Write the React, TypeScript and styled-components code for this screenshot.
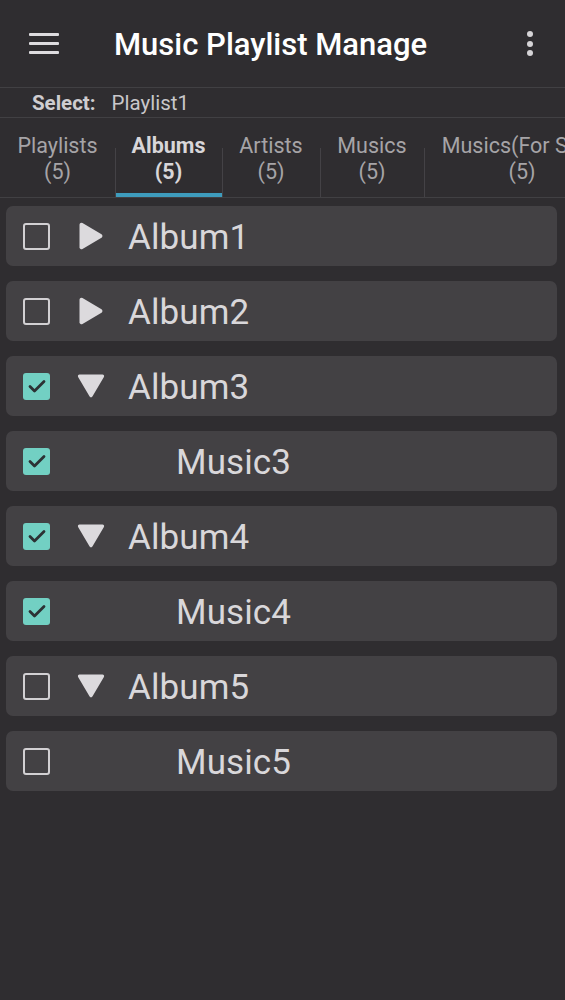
import React, { useState } from 'react';
import styled, { createGlobalStyle } from 'styled-components';

const GlobalStyle = createGlobalStyle`
  html, body {
    margin: 0;
    padding: 0;
    background: #2f2d30;
  }
  body {
    font-family: Roboto, "Noto Sans", "Liberation Sans", sans-serif;
  }
`;

const Page = styled.div`
  width: 565px;
  min-height: 1000px;
  background: #2f2d30;
  overflow: hidden;
`;

const AppBar = styled.header`
  height: 88px;
  display: flex;
  align-items: center;
  border-bottom: 1px solid #414043;
  box-sizing: border-box;
  padding: 0 0 0 29px;
`;

const MenuButton = styled.div`
  width: 30px;
  height: 21px;
  display: flex;
  flex-direction: column;
  justify-content: space-between;
  margin-top: -1px;

  span {
    display: block;
    height: 3px;
    background: #dedcdf;
    border-radius: 1px;
  }
`;

const Title = styled.h1`
  margin: 2px 0 0 55px;
  flex: 1;
  font-size: 31px;
  font-weight: 500;
  color: #ffffff;
  white-space: nowrap;
`;

const MoreButton = styled.div`
  width: 6px;
  display: flex;
  flex-direction: column;
  gap: 3.5px;
  margin-right: 32px;

  span {
    width: 6px;
    height: 6px;
    border-radius: 50%;
    background: #d6d4d7;
  }
`;

const SelectBar = styled.div`
  height: 30px;
  display: flex;
  align-items: center;
  gap: 16px;
  padding-left: 32px;
  border-bottom: 1px solid #414043;
  box-sizing: border-box;
  font-size: 20.5px;
  color: #c9c7ca;
`;

const SelectLabel = styled.span`
  font-weight: 700;
  color: #cfcdd0;
`;

const TabBar = styled.nav`
  height: 80px;
  display: flex;
  border-bottom: 1px solid #414043;
  box-sizing: border-box;
  white-space: nowrap;
`;

const Tab = styled.div<{ $width: number; $active?: boolean; $divider?: boolean }>`
  position: relative;
  flex: 0 0 ${(p) => p.$width}px;
  display: flex;
  flex-direction: column;
  align-items: center;
  padding-top: 15px;
  box-sizing: border-box;
  font-size: 21.5px;
  line-height: 26px;
  font-weight: ${(p) => (p.$active ? 700 : 400)};
  color: ${(p) => (p.$active ? '#d8d6d9' : '#a6a4a7')};
  border-bottom: 4px solid ${(p) => (p.$active ? '#3e9cbd' : 'transparent')};

  &::before {
    content: '';
    display: ${(p) => (p.$divider ? 'block' : 'none')};
    position: absolute;
    left: 0;
    bottom: -4px;
    width: 1px;
    height: 49px;
    background: #444246;
  }
`;

const List = styled.div`
  display: flex;
  flex-direction: column;
  gap: 15px;
  padding: 8px 8px 0 6px;
`;

const Row = styled.div`
  height: 60px;
  display: flex;
  align-items: center;
  padding-left: 17px;
  background: #434144;
  border-radius: 7px;
`;

const CheckBox = styled.div<{ $checked: boolean }>`
  flex: 0 0 auto;
  width: 27px;
  height: 27px;
  box-sizing: border-box;
  border-radius: 3px;
  border: ${(p) => (p.$checked ? 'none' : '2.5px solid #d2d0d3')};
  background: ${(p) => (p.$checked ? '#72d0c3' : 'transparent')};
  display: flex;
  align-items: center;
  justify-content: center;
`;

const Arrow = styled.div`
  flex: 0 0 auto;
  width: 30px;
  height: 28px;
  margin-left: 26px;
  display: flex;
  align-items: center;
  justify-content: center;
`;

const Label = styled.span<{ $indent: boolean }>`
  margin-left: ${(p) => (p.$indent ? '126px' : '22px')};
  margin-top: 2px;
  font-size: 35px;
  color: #d9d7da;
  letter-spacing: 0.1px;
`;

type Item = { name: string; kind: 'album' | 'music'; open?: boolean; checked: boolean };

const items: Item[] = [
  { name: 'Album1', kind: 'album', open: false, checked: false },
  { name: 'Album2', kind: 'album', open: false, checked: false },
  { name: 'Album3', kind: 'album', open: true, checked: true },
  { name: 'Music3', kind: 'music', checked: true },
  { name: 'Album4', kind: 'album', open: true, checked: true },
  { name: 'Music4', kind: 'music', checked: true },
  { name: 'Album5', kind: 'album', open: true, checked: false },
  { name: 'Music5', kind: 'music', checked: false },
];

const tabs = [
  { label: 'Playlists', width: 115 },
  { label: 'Albums', width: 107 },
  { label: 'Artists', width: 98 },
  { label: 'Musics', width: 104 },
  { label: 'Musics(For Sort)', width: 196 },
];

function Check() {
  return (
    <svg width="20" height="16" viewBox="0 0 20 16">
      <path d="M3 8.5l4.5 4.5L17 3.5" fill="none" stroke="#2c3134" strokeWidth="2.8" strokeLinecap="round" strokeLinejoin="round" />
    </svg>
  );
}

function Triangle({ open }: { open?: boolean }) {
  return open ? (
    <svg width="30" height="26" viewBox="0 0 30 26">
      <path d="M3.5 1.5h23a1.6 1.6 0 0 1 1.4 2.4L16.4 23.6a1.6 1.6 0 0 1-2.8 0L2.1 3.9A1.6 1.6 0 0 1 3.5 1.5z" fill="#dcdadd" />
    </svg>
  ) : (
    <svg width="26" height="28" viewBox="0 0 26 28">
      <path d="M1.5 2.8v22.4a2 2 0 0 0 3 1.7l19-11.2a2 2 0 0 0 0-3.4l-19-11.2a2 2 0 0 0-3 1.7z" fill="#dcdadd" />
    </svg>
  );
}

export default function App() {
  const [active] = useState(1);

  return (
    <Page>
      <GlobalStyle />
      <AppBar>
        <MenuButton>
          <span />
          <span />
          <span />
        </MenuButton>
        <Title>Music Playlist Manage</Title>
        <MoreButton>
          <span />
          <span />
          <span />
        </MoreButton>
      </AppBar>
      <SelectBar>
        <SelectLabel>Select:</SelectLabel>
        <span>Playlist1</span>
      </SelectBar>
      <TabBar>
        {tabs.map((t, i) => (
          <Tab key={t.label} $width={t.width} $active={i === active} $divider={i > 0}>
            <span>{t.label}</span>
            <span>(5)</span>
          </Tab>
        ))}
      </TabBar>
      <List>
        {items.map((it) => (
          <Row key={it.name}>
            <CheckBox $checked={it.checked}>{it.checked && <Check />}</CheckBox>
            {it.kind === 'album' && (
              <Arrow>
                <Triangle open={it.open} />
              </Arrow>
            )}
            <Label $indent={it.kind === 'music'}>{it.name}</Label>
          </Row>
        ))}
      </List>
    </Page>
  );
}
